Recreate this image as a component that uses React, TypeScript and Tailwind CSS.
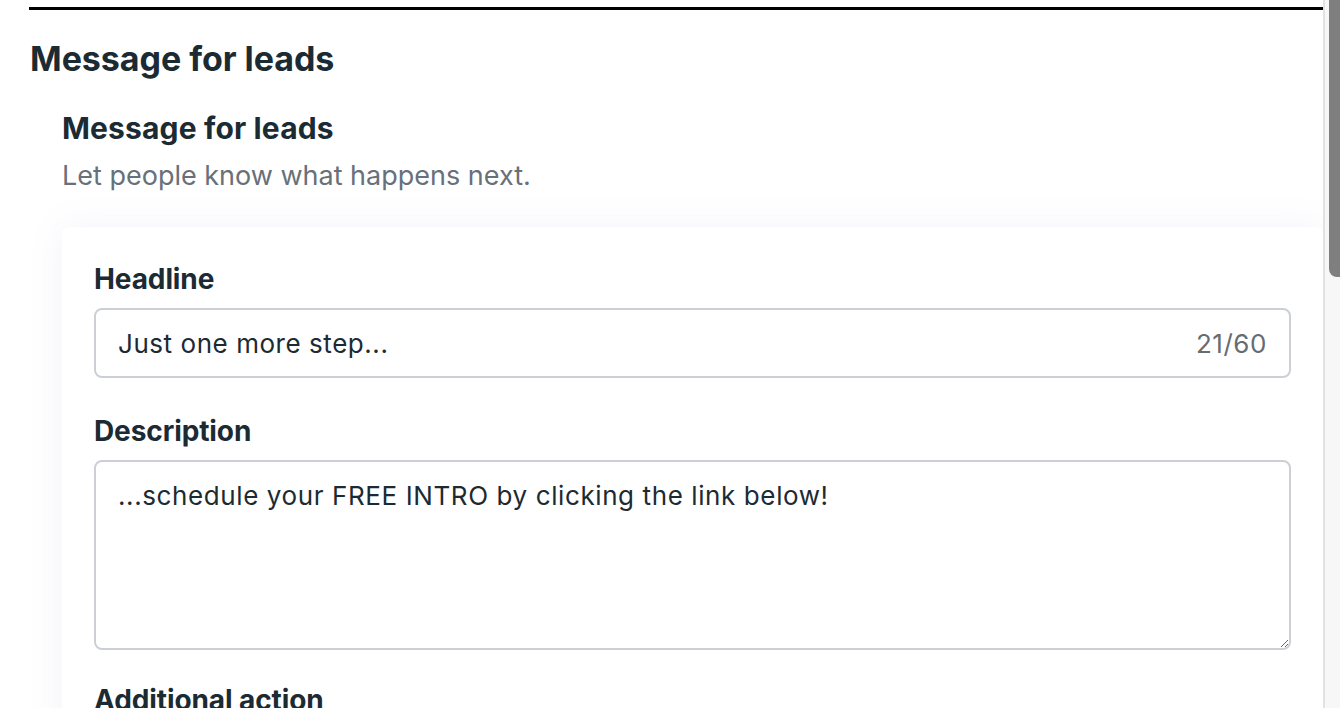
const baseFont = { fontFamily: "Inter, 'Noto Sans', sans-serif" };

const Label = ({ text }: { text: string }) => (
  <label className="block shrink-0 text-[28px] leading-[34px] font-bold tracking-[-0.1px] text-[#1c2b33]">
    {text}
  </label>
);

export default function App() {
  return (
    <div className="flex h-[708px] w-[1340px] overflow-hidden bg-white" style={baseFont}>
      <div className="flex w-[1323px] shrink-0 flex-col pl-[29px]">
        <div className="mt-[7px] h-[3px] w-full shrink-0 bg-black" />
        <h1 className="mt-[29px] shrink-0 pl-[1px] text-[34px] leading-[40px] font-bold tracking-[-0.05px] text-[#1c2b33]">
          Message for leads
        </h1>
        <div className="flex shrink-0 flex-col pl-[33px]">
          <h2 className="mt-[31px] text-[30px] leading-[36px] font-bold tracking-[0.15px] text-[#1c2b33]">
            Message for leads
          </h2>
          <p className="mt-[13px] text-[27px] leading-[34px] text-[#687079]">
            Let people know what happens next.
          </p>
          <div className="mt-[34px] flex flex-col rounded-l-[8px] rounded-tr-[8px] bg-white px-[32px] pt-[35px] pb-[40px] shadow-[0_0_36px_rgba(110,120,200,0.09)]">
            <Label text="Headline" />
            <div className="mt-[12px] flex h-[70px] shrink-0 items-center justify-between rounded-[8px] border-2 border-[#ccd0d5] px-[22px] text-[26px] tracking-[0.55px] text-[#1c2b33]">
              <span>Just one more step...</span>
              <span className="text-[#656c73]">21/60</span>
            </div>
            <div className="mt-[36px]">
              <Label text="Description" />
            </div>
            <textarea
              readOnly
              defaultValue="...schedule your FREE INTRO by clicking the link below!"
              className="mt-[12px] block h-[190px] w-full shrink-0 resize-y rounded-[8px] border-2 border-[#ccd0d5] px-[22px] pt-[18px] text-[26px] leading-[32px] tracking-[0.6px] text-[#1c2b33] outline-none"
              style={baseFont}
            />
            <div className="mt-[33px]">
              <Label text="Additional action" />
            </div>
            <div className="mt-[12px] h-[70px] shrink-0 rounded-[8px] border-2 border-[#ccd0d5]" />
          </div>
        </div>
      </div>
      <div className="w-[2px] shrink-0 bg-[#e2e2e2]" />
      <div className="flex w-[15px] shrink-0 justify-end bg-[#f7f7f7]">
        <div className="h-[277px] w-[11px] rounded-bl-[8px] bg-[#7f7f7f]" />
      </div>
    </div>
  );
}
